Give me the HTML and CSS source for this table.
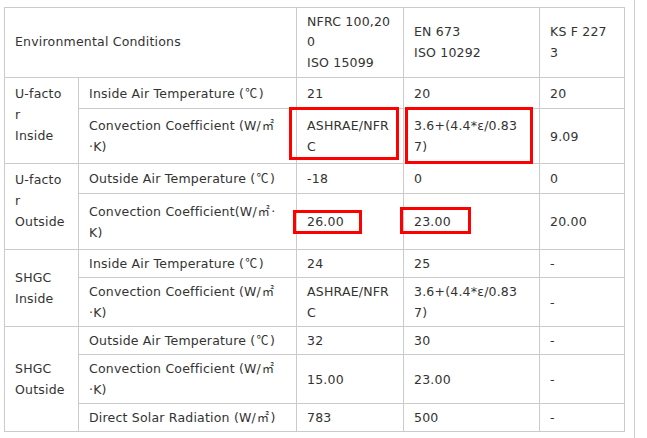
FILE: index.html
```html
<!DOCTYPE html>
<html>
<head>
<meta charset="utf-8">
<link rel="stylesheet" href="styles.css">
</head>
<body>
<div class="page">
  <table class="spec">
    <colgroup>
      <col class="c1"><col class="c2"><col class="c3"><col class="c4"><col class="c5">
    </colgroup>
    <tr class="h-head">
      <th colspan="2">Environmental Conditions</th>
      <th>NFRC 100,20<br>0<br>ISO 15099</th>
      <th>EN 673<br>ISO 10292</th>
      <th>KS F 227<br>3</th>
    </tr>
    <tr class="h31">
      <td rowspan="2" class="group group-up">U-facto<br>r<br>Inside</td>
      <td>Inside Air Temperature (<span class="sym">℃</span>)</td>
      <td>21</td><td>20</td><td>20</td>
    </tr>
    <tr class="h55">
      <td>Convection Coefficient (W/<span class="sym">㎡</span><br>·K)</td>
      <td>ASHRAE/NFR<br>C</td>
      <td>3.6+(4.4*ε/0.83<br>7)</td>
      <td>9.09</td>
    </tr>
    <tr class="h30">
      <td rowspan="2" class="group group-up">U-facto<br>r<br>Outside</td>
      <td>Outside Air Temperature (<span class="sym">℃</span>)</td>
      <td>-18</td><td>0</td><td>0</td>
    </tr>
    <tr class="h56">
      <td>Convection Coefficient(W/<span class="sym">㎡</span>·<br>K)</td>
      <td>26.00</td><td>23.00</td><td>20.00</td>
    </tr>
    <tr class="h28">
      <td rowspan="2" class="group">SHGC<br>Inside</td>
      <td>Inside Air Temperature (<span class="sym">℃</span>)</td>
      <td>24</td><td>25</td><td>-</td>
    </tr>
    <tr class="h49">
      <td>Convection Coefficient (W/<span class="sym">㎡</span><br>·K)</td>
      <td>ASHRAE/NFR<br>C</td>
      <td>3.6+(4.4*ε/0.83<br>7)</td>
      <td>-</td>
    </tr>
    <tr class="h28">
      <td rowspan="3" class="group">SHGC<br>Outside</td>
      <td>Outside Air Temperature (<span class="sym">℃</span>)</td>
      <td>32</td><td>30</td><td>-</td>
    </tr>
    <tr class="h49">
      <td>Convection Coefficient (W/<span class="sym">㎡</span><br>·K)</td>
      <td>15.00</td><td>23.00</td><td>-</td>
    </tr>
    <tr class="h28">
      <td>Direct Solar Radiation (W/<span class="sym">㎡</span>)</td>
      <td>783</td><td>500</td><td>-</td>
    </tr>
  </table>

  <div class="mark mark-1"></div>
  <div class="mark mark-2"></div>
  <div class="mark mark-3"></div>
  <div class="mark mark-4"></div>
</div>
</body>
</html>
```

FILE: styles.css
```css
html, body {
  margin: 0;
  padding: 0;
  background: #fff;
}

.page {
  position: relative;
  box-sizing: border-box;
  width: 635px;
  height: 438px;
  padding: 7px 0 0 4px;
  border-right: 1px solid #cccccc;
  font-family: "DejaVu Sans", "Noto Sans CJK KR", sans-serif;
  font-size: 12.5px;
  letter-spacing: 0.2px;
  color: #333333;
}

.spec {
  border-collapse: collapse;
  table-layout: fixed;
  width: 620px;
}

.c1 { width: 74px; }
.c2 { width: 218px; }
.c3 { width: 107px; }
.c4 { width: 136px; }
.c5 { width: 85px; }

.spec th,
.spec td {
  border: 1px solid #cbcbcb;
  padding: 3px 10px;
  line-height: 21px;
  text-align: left;
  vertical-align: middle;
  font-weight: normal;
  white-space: nowrap;
  overflow: hidden;
}

.sym {
  font-family: "Noto Sans CJK KR", sans-serif;
  font-size: 12px;
  line-height: 0;
  letter-spacing: 0.5px;
  padding: 0 1px;
}

.spec .group-up {
  padding-bottom: 16px;
}

.h-head { height: 70px; }
.h-head th { line-height: 20.5px; }
.h31 { height: 31px; }
.h55 { height: 55px; }
.h30 { height: 30px; }
.h56 { height: 56px; }
.h28 { height: 28px; }
.h49 { height: 49px; }

.mark {
  position: absolute;
  box-sizing: border-box;
  border: 3px solid #ff0000;
}

.mark-1 { left: 289px; top: 107px; width: 110px; height: 53px; }
.mark-2 { left: 405px; top: 107px; width: 128px; height: 57px; }
.mark-3 { left: 293px; top: 210px; width: 69px; height: 24px; }
.mark-4 { left: 400px; top: 207px; width: 71px; height: 27px; }
```
